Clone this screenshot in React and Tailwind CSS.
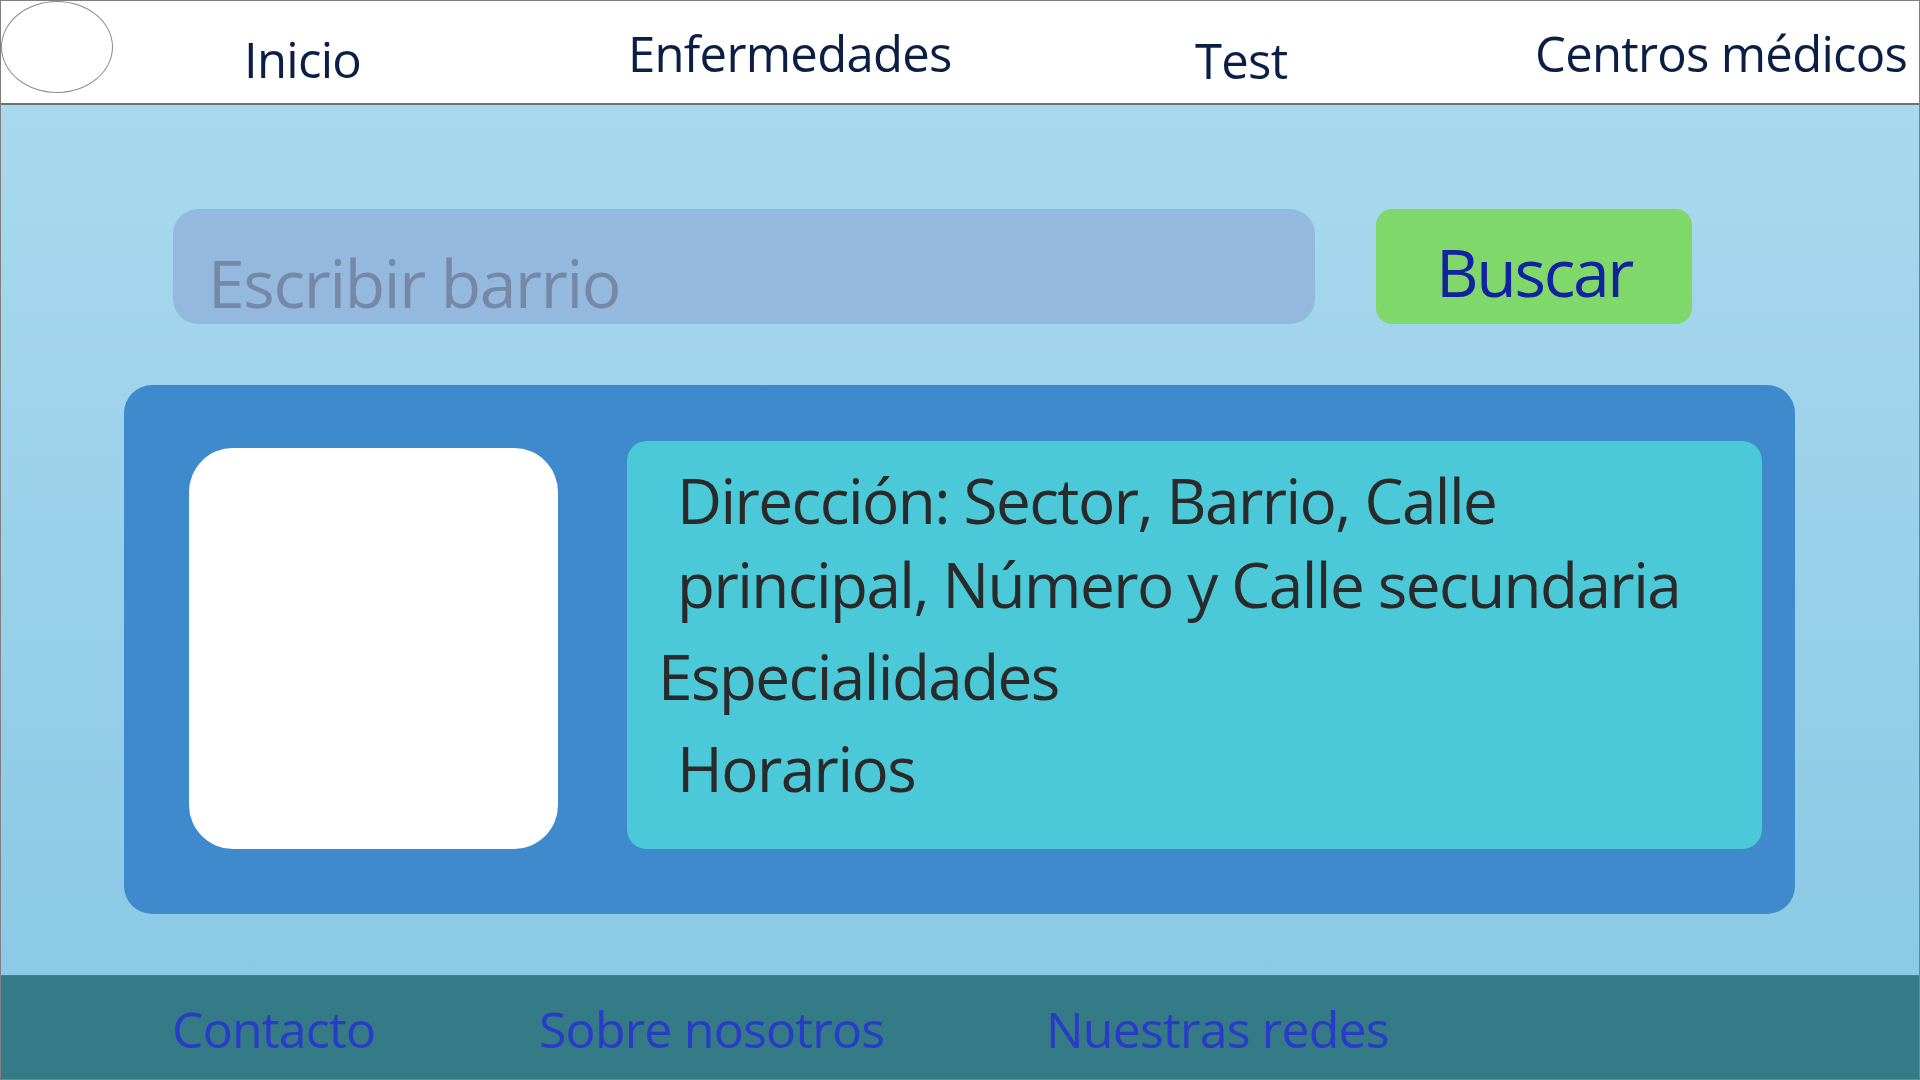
export default function App() {
  return (
    <div className="w-[1920px] h-[1080px] flex flex-col overflow-hidden border border-[#7f7f7f] font-['Open_Sans',sans-serif]">
      {/* Header */}
      <header className="h-[104px] shrink-0 flex bg-white border-b-2 border-[#6f6f6f] tracking-[-0.045em]">
        <div className="w-[243px] shrink-0">
          <div className="w-[112px] h-[92px] rounded-[50%] border border-[#8a8a8a]"></div>
        </div>
        <a className="w-[384px] shrink-0 mt-[34px] text-[49px] leading-none text-[#0b1f45]">Inicio</a>
        <a className="w-[567px] shrink-0 mt-[28px] text-[49px] leading-none text-[#0b1f45]">Enfermedades</a>
        <a className="w-[340px] shrink-0 mt-[35px] text-[49px] leading-none text-[#0b1f45]">Test</a>
        <a className="mt-[28px] text-[49px] leading-none whitespace-nowrap text-[#0b1f45]">Centros médicos</a>
      </header>

      {/* Main */}
      <main className="flex-1 flex flex-col bg-linear-to-b from-[#a9d9ee] to-[#8bc9e6]">
        <div className="flex pt-[104px] pl-[172px]">
          <input
            type="text"
            placeholder="Escribir barrio"
            className="w-[1142px] h-[115px] rounded-[25px] bg-[#95b8df] pl-[35px] pt-[31px] text-[66px] leading-none tracking-[-0.02em] text-[#3b4a66] placeholder:text-[#7588a5] outline-none"
          />
          <button className="ml-[61px] w-[316px] h-[115px] rounded-[16px] bg-[#80d86a] flex items-center justify-center pt-[8px] text-[66px] leading-none tracking-[-0.035em] text-[#1222a0]">
            Buscar
          </button>
        </div>

        <div className="ml-[123px] mt-[61px] w-[1671px] h-[529px] rounded-[28px] bg-[#3f8acc] flex items-start">
          <div className="ml-[65px] mt-[63px] w-[369px] h-[401px] rounded-[44px] bg-white"></div>
          <div className="ml-[69px] mt-[56px] w-[1135px] h-[408px] rounded-[20px] bg-[#4cc9d8] pt-[17px] text-[62px] leading-[84px] tracking-[-0.025em] text-[#2a2a2a]">
            <p className="pl-[50px]">
              Dirección: Sector, Barrio, Calle
              <br />
              principal, Número y Calle secundaria
            </p>
            <p className="pl-[31px] mt-[8px]">Especialidades</p>
            <p className="pl-[50px] mt-[8px]">Horarios</p>
          </div>
        </div>
      </main>

      {/* Footer */}
      <footer className="h-[104px] shrink-0 flex pt-[28px] pl-[171px] bg-[#347a87] border-t border-[#6f6f6f] tracking-[-0.05em]">
        <a className="w-[367px] shrink-0 text-[50px] leading-none text-[#2b3bc9]">Contacto</a>
        <a className="w-[507px] shrink-0 text-[50px] leading-none text-[#2b3bc9]">Sobre nosotros</a>
        <a className="text-[50px] leading-none text-[#2b3bc9] whitespace-nowrap">Nuestras redes</a>
      </footer>
    </div>
  );
}
